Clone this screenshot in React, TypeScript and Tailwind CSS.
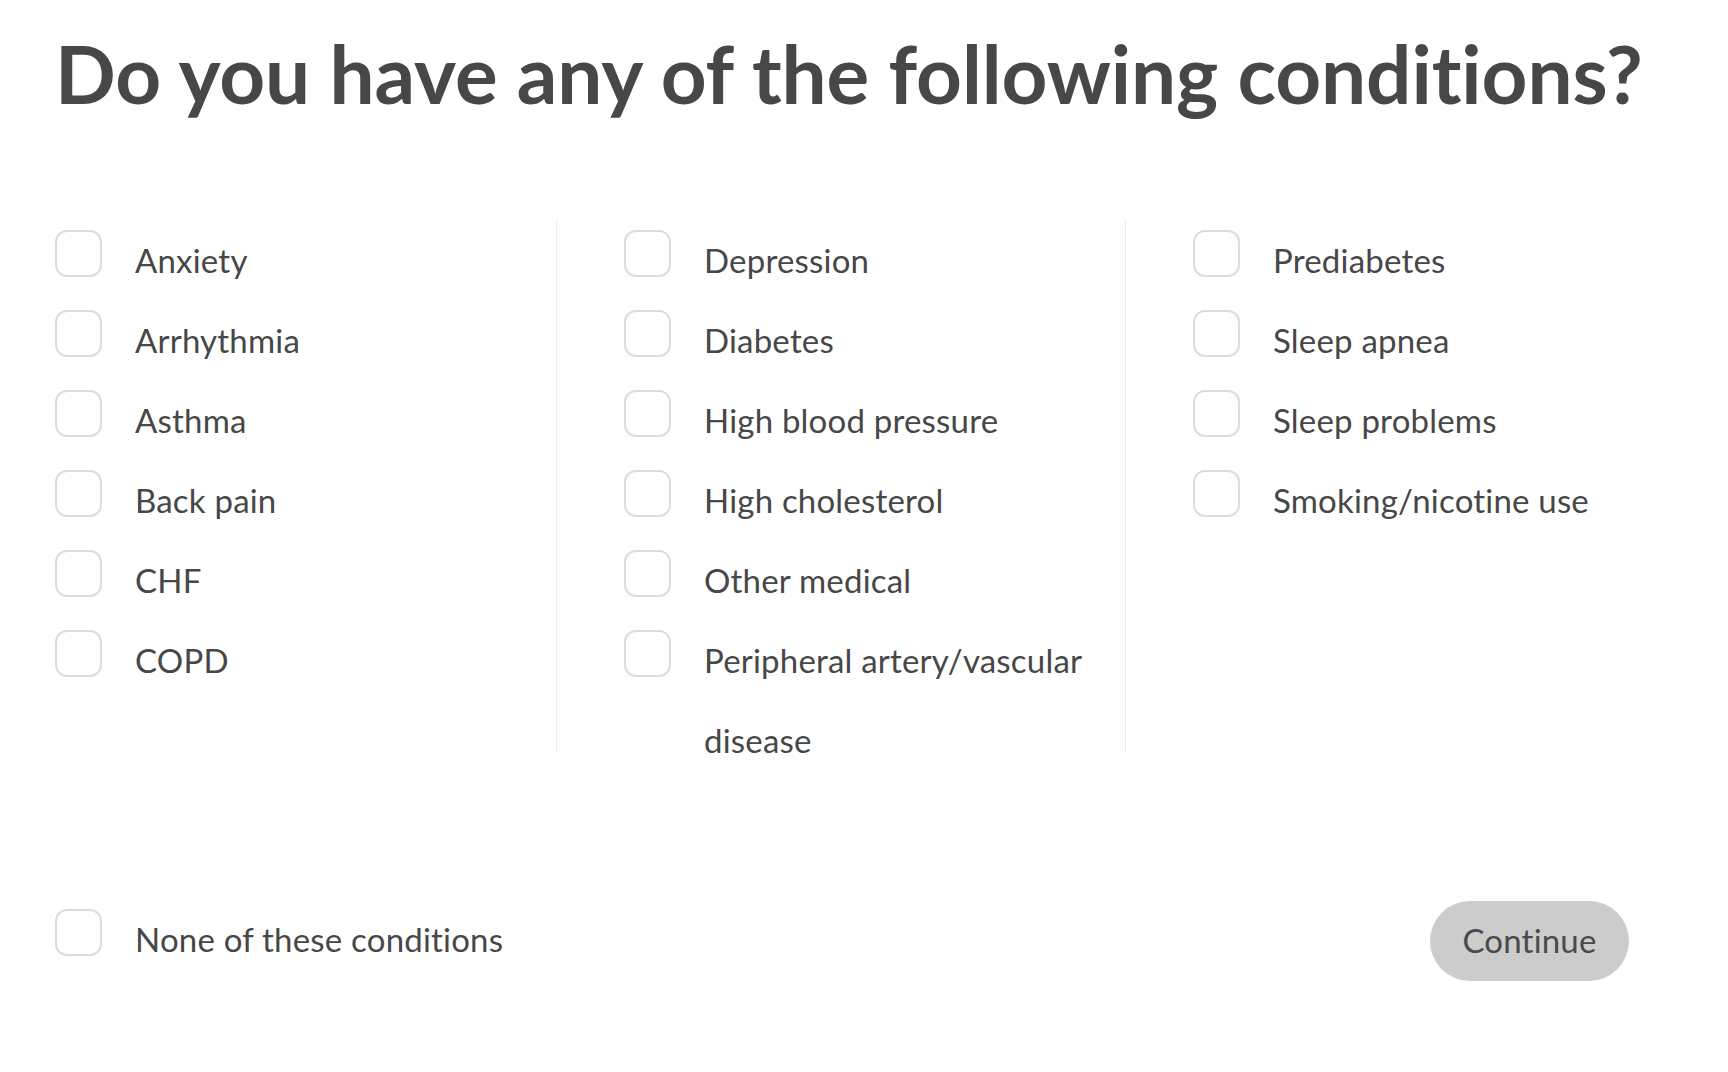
const columns: string[][] = [
  ["Anxiety", "Arrhythmia", "Asthma", "Back pain", "CHF", "COPD"],
  [
    "Depression",
    "Diabetes",
    "High blood pressure",
    "High cholesterol",
    "Other medical",
    "Peripheral artery/vascular disease",
  ],
  ["Prediabetes", "Sleep apnea", "Sleep problems", "Smoking/nicotine use"],
];

function Box() {
  return (
    <span className="mt-[10px] block h-[47px] w-[47px] shrink-0 rounded-[12px] border-2 border-[#dcdcdc] bg-white" />
  );
}

function Option({ label }: { label: string }) {
  return (
    <label className="flex cursor-pointer items-start gap-[33px]">
      <Box />
      <span className="text-[33px] leading-[80px] tracking-[0.2px]">{label}</span>
    </label>
  );
}

export default function App() {
  return (
    <div
      className="min-h-screen bg-white pl-[55px] pr-[99px] pt-[33px] text-[#474747]"
      style={{ fontFamily: "Lato, 'Open Sans', sans-serif" }}
    >
      <h1 className="whitespace-nowrap text-[80px] font-bold leading-[80px] tracking-[-0.1px]">
        Do you have any of the following conditions?
      </h1>

      <div className="mt-[107px] flex h-[532px]">
        {columns.map((items, i) => (
          <div
            key={i}
            className={
              i === 0
                ? "w-[501px] shrink-0 pr-[20px]"
                : i === 1
                  ? "w-[569px] shrink-0 border-l border-[#ececec] pl-[67px] pr-[20px]"
                  : "w-[500px] shrink-0 border-l border-[#ececec] pl-[67px]"
            }
          >
            {items.map((label) => (
              <Option key={label} label={label} />
            ))}
          </div>
        ))}
      </div>

      <div className="mt-[147px] flex items-start justify-between">
        <Option label="None of these conditions" />
        <button className="mt-[2px] h-[80px] w-[199px] rounded-full bg-[#cccccc] text-[33px] tracking-[0.2px] text-[#4a4a4a]">
          Continue
        </button>
      </div>
    </div>
  );
}
